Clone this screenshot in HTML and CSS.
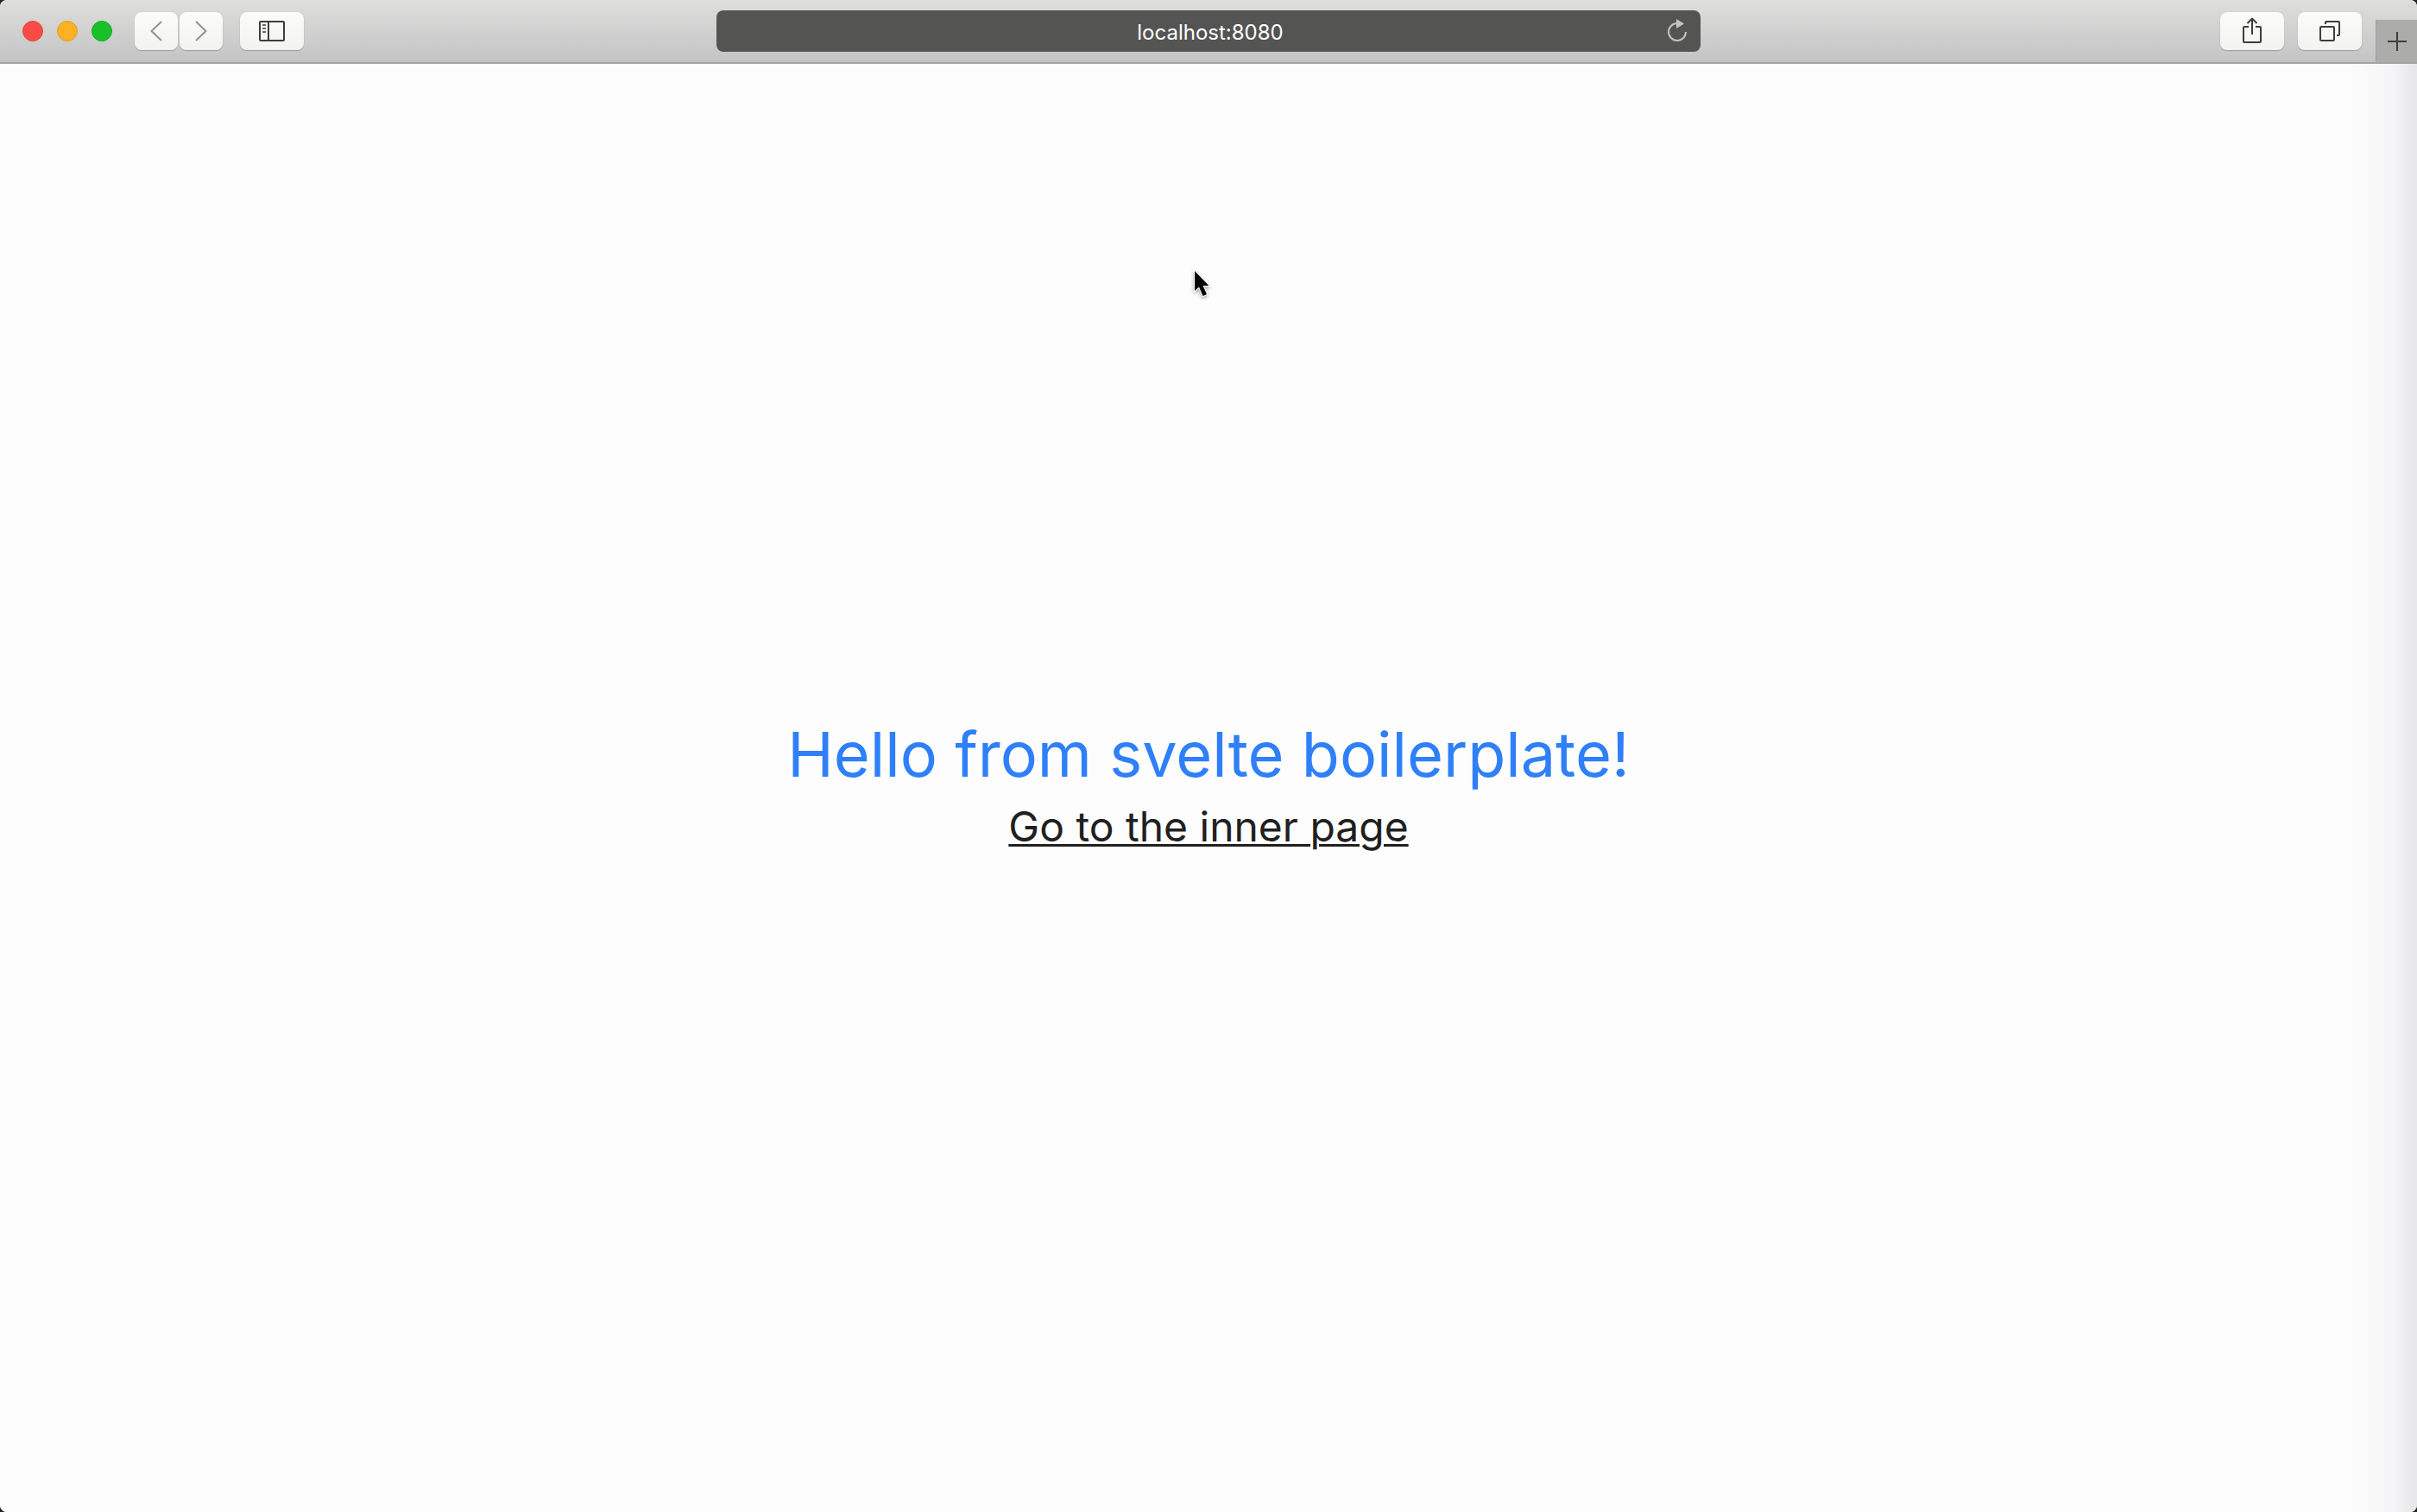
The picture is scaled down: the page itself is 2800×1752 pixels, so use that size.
FILE: index.html
```
<!DOCTYPE html>
<html lang="en">
<head>
<meta charset="utf-8">
<title>localhost:8080</title>
<link rel="stylesheet" href="styles.css">
</head>
<body>
<div class="window">
  <header class="toolbar">
    <div class="tools">
      <div class="lights">
        <button class="light close" aria-label="Close"></button>
        <button class="light minimize" aria-label="Minimize"></button>
        <button class="light maximize" aria-label="Full screen"></button>
      </div>
      <div class="history">
        <button class="tool narrow" aria-label="Back"><svg width="50" height="44" viewBox="0 0 50 44" class="icon faint"><path d="M31 11 19.500 22 31 33"/></svg></button>
        <button class="tool narrow" aria-label="Forward"><svg width="50" height="44" viewBox="0 0 50 44" class="icon faint"><path d="M19 11 30.500 22 19 33"/></svg></button>
      </div>
      <button class="tool" aria-label="Show sidebar"><svg width="74" height="44" viewBox="0 0 74 44" class="icon"><rect x="23" y="11" width="28" height="22" rx="1"/><path d="M33 11V33"/><path d="M26 15h4M26 19h4M26 23h4" stroke-width="1.500"/></svg></button>
    </div>
    <div class="address">
      <input class="url" type="text" value="localhost:8080" aria-label="Address">
      <button class="reload" aria-label="Reload"><svg width="26" height="30" viewBox="0 0 26 30"><path d="M23 16a10 10 0 1 1-10-10" fill="none" stroke="currentColor" stroke-width="2"/><path d="M12 1v11l9-5.500z" fill="currentColor"/></svg></button>
    </div>
    <div class="tools end">
      <button class="tool" aria-label="Share"><svg width="74" height="44" viewBox="0 0 74 44" class="icon"><path d="M33 17H28a1 1 0 0 0-1 1V34a1 1 0 0 0 1 1H46a1 1 0 0 0 1-1V18a1 1 0 0 0-1-1H41M37 26V8M31.500 13 37 7.500 42.500 13"/></svg></button>
      <button class="tool" aria-label="Show all tabs"><svg width="74" height="44" viewBox="0 0 74 44" class="icon"><rect x="26" y="17" width="16" height="16" rx="1"/><path d="M32 14V12a1 1 0 0 1 1-1H47a1 1 0 0 1 1 1V26a1 1 0 0 1-1 1H45"/></svg></button>
      <button class="newtab" aria-label="New tab"><svg width="22" height="22" viewBox="0 0 22 22" class="icon"><path d="M11 0V22M0 11H22"/></svg></button>
    </div>
  </header>
  <main class="page">
    <h1 class="title">Hello from svelte boilerplate!</h1>
    <a class="link" href="#inner">Go to the inner page</a>
  </main>
</div>
<svg class="cursor" width="30" height="40" viewBox="0 0 30 40" aria-hidden="true"><path d="M4 3V26L9 21.500 13.500 32 18 30 13.500 20H20.500Z" fill="#000" stroke="#fff" stroke-width="2" paint-order="stroke"/></svg>
</body>
</html>
```
FILE: styles.css
```
* {
  box-sizing: border-box;
}

body {
  margin: 0;
  background: #22261f;
  font-family: Inter, "Liberation Sans", sans-serif;
}

button {
  padding: 0;
  border: 0;
  color: #3e3e3a;
}

svg {
  display: block;
}

.window {
  display: flex;
  flex-direction: column;
  min-height: 100vh;
  border-radius: 8px;
  overflow: hidden;
  background: #fdfdfd;
}

.toolbar {
  display: grid;
  grid-template-columns: minmax(0, 8fr) minmax(0, 11fr) minmax(0, 8fr);
  align-items: center;
  height: 74px;
  border-bottom: 2px solid #a4a4a6;
  background: linear-gradient(#dededd, #c4c4c4);
}

.tools {
  display: flex;
  align-items: center;
  gap: 20px;
  padding-left: 26px;
}

.tools.end {
  align-self: stretch;
  justify-content: flex-end;
  gap: 16px;
  padding-left: 0;
}

.lights {
  display: flex;
  gap: 16px;
  margin-right: 6px;
}

.light {
  width: 24px;
  height: 24px;
  border-radius: 50%;
}

.close {
  border: 1px solid #e0443e;
  background: #fb4b44;
}

.minimize {
  border: 1px solid #dfa023;
  background: #fcb024;
}

.maximize {
  border: 1px solid #14a922;
  background: #18c128;
}

.history {
  display: flex;
  gap: 2px;
}

.tool {
  width: 74px;
  height: 44px;
  border-radius: 8px;
  background: linear-gradient(#fbfbfa, #f3f3f2);
  box-shadow: 0 1px 1px #9c9c9a, 0 0 1px #b4b4b2;
}

.narrow {
  width: 50px;
}

.icon {
  fill: none;
  stroke: currentColor;
  stroke-width: 2;
  stroke-linejoin: round;
}

.faint {
  stroke: #92928f;
}

.address {
  display: grid;
  grid-template-columns: 40px 1fr 40px;
  height: 48px;
  border-radius: 8px;
  background: #545453;
}

.url {
  grid-column: 2;
  min-width: 0;
  height: 48px;
  padding: 2px 0 0 4px;
  border: 0;
  outline: 0;
  background: none;
  color: #fff;
  font: 400 24px/46px Inter, "Liberation Sans", sans-serif;
  text-align: center;
}

.reload {
  align-self: center;
  justify-self: start;
  width: 26px;
  background: none;
  color: #c4c4c2;
}

.newtab {
  display: grid;
  place-items: center;
  align-self: flex-end;
  width: 48px;
  height: 49px;
  border-left: 1px solid #a0a09f;
  background: #acacab;
}

.page {
  display: flex;
  flex: 1;
  flex-direction: column;
  align-items: center;
  justify-content: center;
  gap: 12px;
  padding-bottom: 8px;
  background: linear-gradient(to left, #e6e6ea, #f5f5f7 28px, #fdfdfd 80px);
}

.title {
  margin: 0;
  color: #2f80f8;
  font-size: 72px;
  font-weight: 400;
  line-height: 86px;
}

.link {
  color: #20201f;
  font-size: 48px;
  font-weight: 400;
  line-height: 58px;
  text-underline-offset: 3px;
  text-decoration-thickness: 3px;
}

.cursor {
  position: absolute;
  top: 311px;
  left: 1380px;
  filter: drop-shadow(0 2px 2px #00000055);
}
```
